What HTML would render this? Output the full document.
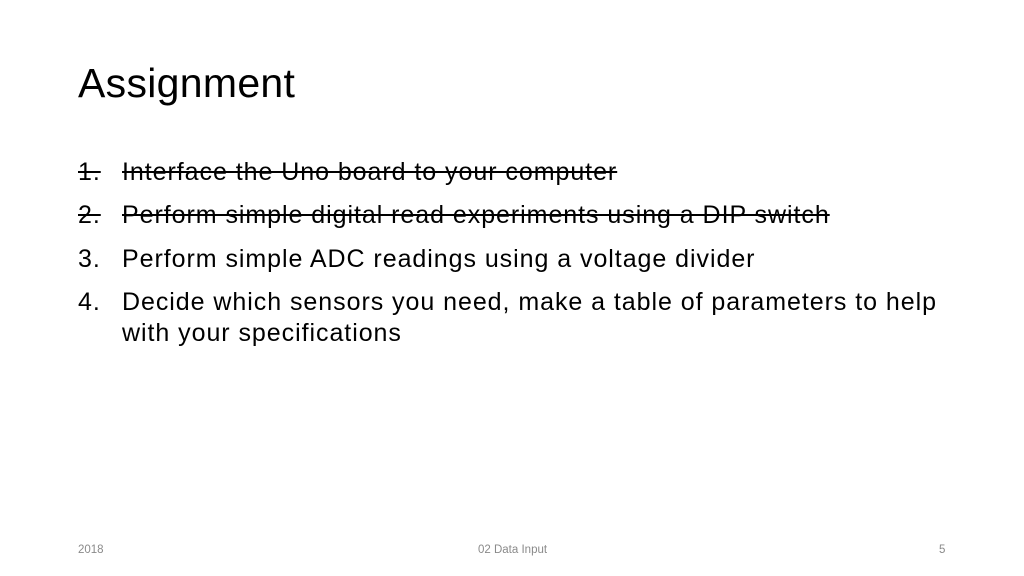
<!DOCTYPE html>
<html><head><meta charset="utf-8"><style>
body{margin:0;width:1024px;height:576px;background:#fff;position:relative;overflow:hidden;font-family:"Liberation Sans",sans-serif;color:#000}
.t{position:absolute;left:78px;top:60px;font-size:41px;letter-spacing:0.3px;white-space:nowrap}
.l{position:absolute;left:78px;font-size:25px;letter-spacing:0.95px;white-space:nowrap}
.l .n{position:absolute;left:0}
.l .x{position:absolute;left:44px}
.s span{text-decoration:line-through}
.f{position:absolute;top:544px;font-size:11.5px;color:#8a8a8a}
</style></head><body>
<div class="t">Assignment</div>
<div class="l s" style="top:158px"><span class="n">1.</span><span class="x">Interface the Uno board to your computer</span></div>
<div class="l s" style="top:201px"><span class="n">2.</span><span class="x">Perform simple digital read experiments using a DIP switch</span></div>
<div class="l" style="top:245px"><span class="n">3.</span><span class="x">Perform simple ADC readings using a voltage divider</span></div>
<div class="l" style="top:288px"><span class="n">4.</span><span class="x">Decide which sensors you need, make a table of parameters to help</span></div>
<div class="l" style="top:319px"><span class="x">with your specifications</span></div>
<div class="f" style="left:78px">2018</div>
<div class="f" style="left:478px">02 Data Input</div>
<div class="f" style="left:939px">5</div>
</body></html>
